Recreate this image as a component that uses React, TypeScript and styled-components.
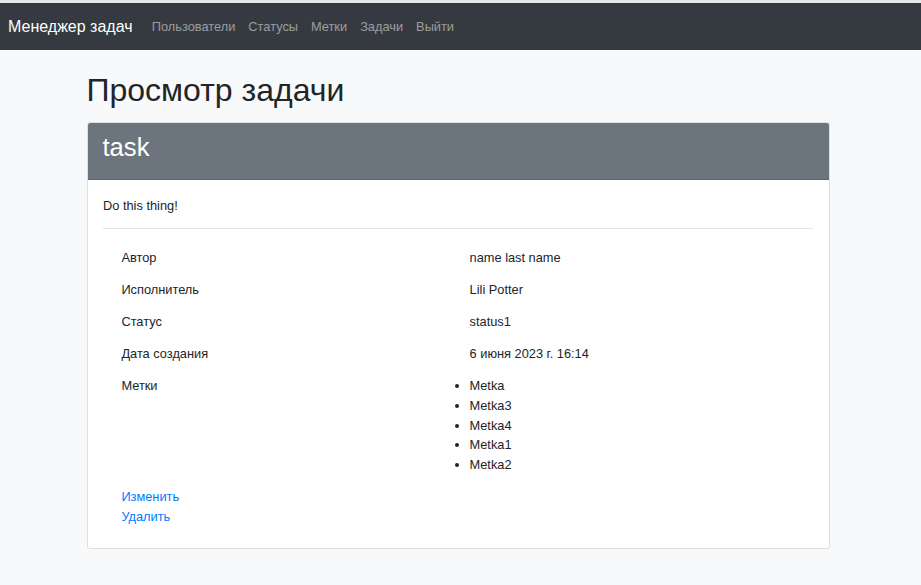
import React from "react";
import styled, { createGlobalStyle } from "styled-components";

const GlobalStyle = createGlobalStyle`
  html, body {
    margin: 0;
    padding: 0;
  }
  body {
    background: #f8f9fa;
    font-family: "Liberation Sans", Arial, sans-serif;
    font-size: 12.8px;
    line-height: 1.5;
    color: #212529;
  }
  * { box-sizing: border-box; }
`;

const TopStrip = styled.div`
  height: 3px;
  background: #e4e6e8;
`;

const Navbar = styled.nav`
  height: 47px;
  background: #343a40;
  display: flex;
  align-items: center;
  padding: 0 8px;
`;

const Brand = styled.a`
  font-size: 16px;
  line-height: 24px;
  color: #fff;
  margin-right: 12.8px;
  text-decoration: none;
`;

const NavList = styled.div`
  display: flex;
  align-items: center;
`;

const NavLink = styled.a`
  padding: 0 6.5px;
  color: rgba(255, 255, 255, 0.5);
  text-decoration: none;
  font-size: 12.8px;
  line-height: 19.2px;
`;

const Main = styled.main`
  width: 743px;
  margin-left: 86.5px;
  padding-top: 21px;
`;

const PageTitle = styled.h1`
  font-size: 32px;
  line-height: 38.4px;
  font-weight: 400;
  margin: 0 0 12.6px;
  color: #212529;
`;

const Card = styled.section`
  background: #fff;
  border: 1px solid rgba(0, 0, 0, 0.125);
  border-radius: 3.2px;
  overflow: hidden;
`;

const CardHeader = styled.header`
  background: #6c757d;
  padding: 9.4px 15px 10.4px;
  border-bottom: 1px solid rgba(0, 0, 0, 0.125);
`;

const CardTitle = styled.h2`
  font-size: 25.6px;
  line-height: 30.7px;
  font-weight: 400;
  margin: 0 0 5.5px;
  color: #fff;
`;

const CardBody = styled.div`
  padding: 16px 15.5px 16px;
`;

const Description = styled.p`
  margin: 0 0 12.8px;
  line-height: 19.2px;
`;

const Divider = styled.hr`
  margin: 0 0 12.8px;
  border: 0;
  border-top: 1px solid rgba(0, 0, 0, 0.1);
`;

const Details = styled.div`
  margin: 0 12px;
  display: flex;
  flex-direction: column;
`;

const DetailRow = styled.div`
  display: grid;
  grid-template-columns: 348.2px 1fr;
`;

const Cell = styled.div`
  padding: 6.4px;
  line-height: 19.2px;
`;

const TagList = styled.ul`
  margin: 0;
  padding: 0;
  list-style: disc outside;
`;

const TagItem = styled.li`
  line-height: 19.75px;
`;

const Actions = styled.div`
  margin: 5.5px 18.4px 5px;
  display: flex;
  flex-direction: column;
  align-items: flex-start;
`;

const ActionLink = styled.a`
  color: #007bff;
  text-decoration: none;
  line-height: 20px;
`;

const rows: [string, string][] = [
  ["Автор", "name last name"],
  ["Исполнитель", "Lili Potter"],
  ["Статус", "status1"],
  ["Дата создания", "6 июня 2023 г. 16:14"],
];

const tags = ["Metka", "Metka3", "Metka4", "Metka1", "Metka2"];

export default function App() {
  return (
    <>
      <GlobalStyle />
      <TopStrip />
      <Navbar>
        <Brand href="#">Менеджер задач</Brand>
        <NavList>
          <NavLink href="#">Пользователи</NavLink>
          <NavLink href="#">Статусы</NavLink>
          <NavLink href="#">Метки</NavLink>
          <NavLink href="#">Задачи</NavLink>
          <NavLink href="#">Выйти</NavLink>
        </NavList>
      </Navbar>
      <Main>
        <PageTitle>Просмотр задачи</PageTitle>
        <Card>
          <CardHeader>
            <CardTitle>task</CardTitle>
          </CardHeader>
          <CardBody>
            <Description>Do this thing!</Description>
            <Divider />
            <Details>
              {rows.map(([label, value]) => (
                <DetailRow key={label}>
                  <Cell>{label}</Cell>
                  <Cell>{value}</Cell>
                </DetailRow>
              ))}
              <DetailRow>
                <Cell>Метки</Cell>
                <Cell>
                  <TagList>
                    {tags.map((t) => (
                      <TagItem key={t}>{t}</TagItem>
                    ))}
                  </TagList>
                </Cell>
              </DetailRow>
            </Details>
            <Actions>
              <ActionLink href="#">Изменить</ActionLink>
              <ActionLink href="#">Удалить</ActionLink>
            </Actions>
          </CardBody>
        </Card>
      </Main>
    </>
  );
}
